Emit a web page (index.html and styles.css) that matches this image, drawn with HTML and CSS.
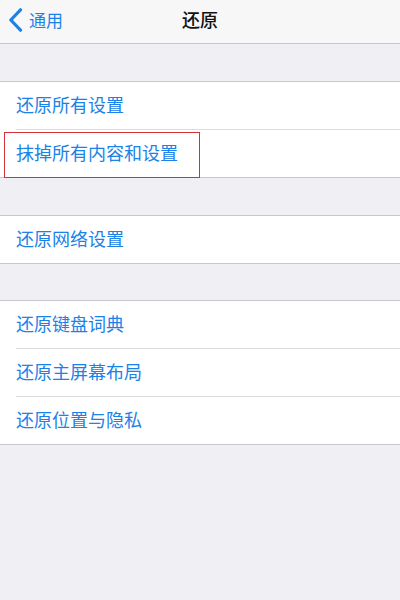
FILE: index.html
```html
<!DOCTYPE html>
<html lang="zh-CN">
<head>
<meta charset="utf-8">
<title>还原</title>
<link rel="stylesheet" href="styles.css">
</head>
<body>
<div class="nav">
  <div class="back">
    <svg class="chev" width="15" height="24" viewBox="0 0 15 24"><path d="M12.5 1.8 L2.8 12 L12.5 22.2" fill="none" stroke="#1b82e8" stroke-width="3.2" stroke-linecap="round" stroke-linejoin="round"/></svg>
    <span>通用</span>
  </div>
  <div class="title">还原</div>
</div>
<div class="group g1">
  <div class="row">还原所有设置</div>
  <div class="row mark">抹掉所有内容和设置<div class="hl"></div></div>
</div>
<div class="group g2">
  <div class="row">还原网络设置</div>
</div>
<div class="group g3">
  <div class="row">还原键盘词典</div>
  <div class="row">还原主屏幕布局</div>
  <div class="row">还原位置与隐私</div>
</div>
</body>
</html>
```
FILE: styles.css
```css
html, body {
  margin: 0;
  padding: 0;
  background: #efeff4;
  font-family: "Noto Sans CJK SC", "Noto Sans", sans-serif;
  width: 400px;
  height: 600px;
  overflow: hidden;
}
.nav {
  height: 43px;
  background: #f7f7f7;
  border-bottom: 1px solid #c9c9cd;
  position: relative;
  display: flex;
  align-items: center;
  justify-content: center;
}
.back {
  position: absolute;
  left: 8px;
  top: 0;
  height: 43px;
  display: flex;
  align-items: center;
  gap: 6px;
  color: #1b82e8;
  font-size: 17px;
}
.chev { display: block; margin-top: -4px; }
.back span { margin-top: -5px; }
.title {
  font-size: 18px;
  font-weight: 500;
  color: #111;
  margin-top: -5px;
}
.group {
  background: #fff;
  border-top: 1px solid #c9c9cd;
  border-bottom: 1px solid #c9c9cd;
}
.g1 { margin-top: 37px; }
.g2 { margin-top: 37px; }
.g3 { margin-top: 36px; }
.row {
  height: 43px;
  padding-bottom: 4px;
  display: flex;
  align-items: center;
  padding-left: 16px;
  font-size: 18px;
  color: #1b82e8;
  position: relative;
}
.row + .row {
  border-top: 1px solid #dcdce0;
  margin-left: 16px;
  padding-left: 0;
}
.hl {
  position: absolute;
  left: -12px;
  top: 2px;
  width: 194px;
  height: 44px;
  border: 1px solid #d2323a;
}
```
